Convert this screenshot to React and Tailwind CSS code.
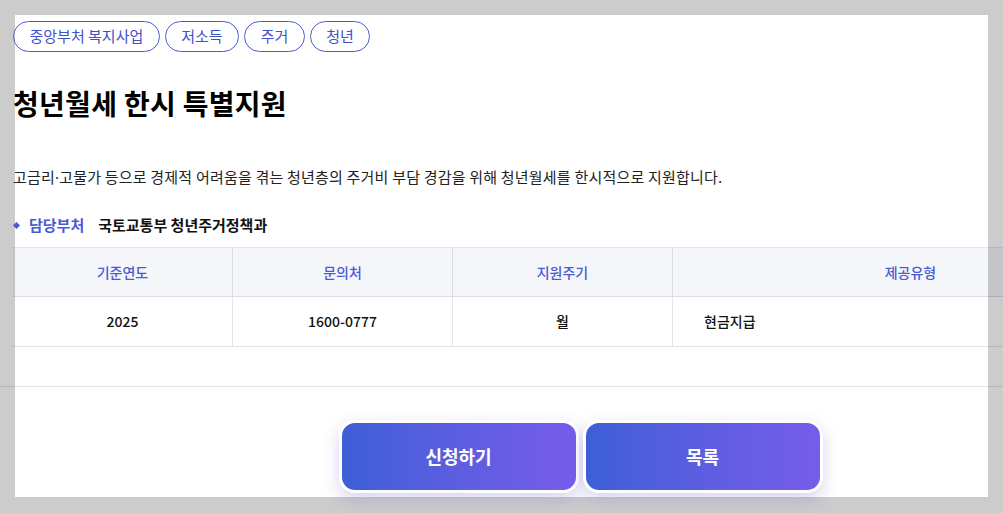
const tags = ["중앙부처 복지사업", "저소득", "주거", "청년"];

const cols = [
  { head: "기준연도", value: "2025" },
  { head: "문의처", value: "1600-0777" },
  { head: "지원주기", value: "월" },
];

export default function App() {
  return (
    <div
      className="relative w-[1003px] h-[513px] overflow-hidden bg-[#cccccc]"
      style={{ fontFamily: '"Noto Sans CJK KR", "Noto Sans", sans-serif' }}
    >
      <div className="ml-[15px] mt-[15px] w-[973px] h-[482px] bg-white">
        <div className="-ml-[2px] w-[1135px] pt-[6px]">
          {/* tags */}
          <div className="flex gap-[5px]">
            {tags.map((t) => (
              <span key={t} className="h-[31px] px-[15.5px] flex items-center rounded-full border border-[#4a5bd6] text-[15px] text-[#3f51c7]">
                {t}
              </span>
            ))}
          </div>

          <h1 className="mt-[31px] text-[28px] leading-[40px] font-bold tracking-[0.3px] text-black">청년월세 한시 특별지원</h1>

          <p className="mt-[43px] text-[15px] leading-[22px] tracking-[0.2px] text-[#222]">
            고금리<span className="font-['Noto_Sans']">·</span>고물가 등으로 경제적 어려움을 겪는 청년층의 주거비 부담 경감을 위해 청년월세를 한시적으로 지원합니다.
          </p>

          <div className="mt-[26px] flex items-center text-[15px] leading-[22px] font-bold">
            <span className="ml-[1px] w-[5px] h-[5px] rotate-45 bg-[#4a5bd6]" />
            <span className="ml-[10px] text-[#4a5bd6]">담당부처</span>
            <span className="ml-[14px] text-[#111]">국토교통부 청년주거정책과</span>
          </div>

          {/* table */}
          <div className="mt-[11px] border-t border-black/10">
            <div className="flex h-[49px] bg-[#3c46a0]/[0.05] border-b border-black/10 text-[14px] font-medium text-[#4a5bd6]">
              {cols.map((c) => (
                <div key={c.head} className="w-[220px] flex items-center justify-center border-r border-black/10">{c.head}</div>
              ))}
              <div className="flex-1 flex items-center justify-center">제공유형</div>
            </div>
            <div className="flex h-[50px] border-b border-black/10 text-[14px] font-medium text-[#111]">
              {cols.map((c) => (
                <div key={c.head} className="w-[220px] flex items-center justify-center border-r border-black/10">{c.value}</div>
              ))}
              <div className="flex-1 flex items-center pl-[31px]">현금지급</div>
            </div>
          </div>

          <div className="-ml-[13px] mt-[39px] w-[1200px] h-px bg-black/10" />

          {/* buttons */}
          <div className="mt-[33px] flex justify-center gap-[4px]">
            {["신청하기", "목록"].map((b) => (
              <button
                key={b}
                className="w-[240px] h-[73px] rounded-[16px] border-[3px] border-white bg-gradient-to-r from-[#3c5fd6] to-[#775ceb] text-white text-[18px] font-bold shadow-[0_6px_16px_rgba(90,80,200,0.25)]"
              >
                {b}
              </button>
            ))}
          </div>
        </div>
      </div>
    </div>
  );
}
